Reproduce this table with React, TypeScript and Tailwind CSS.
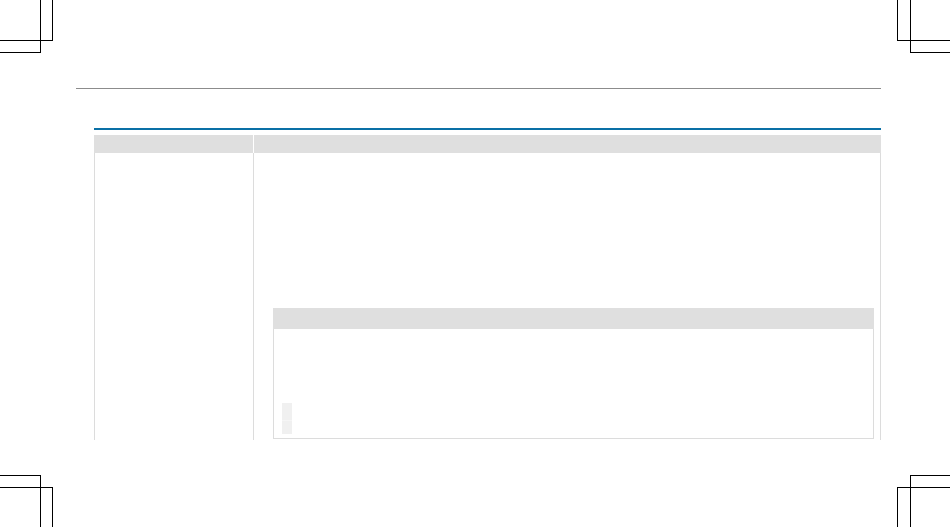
import React from 'react';

const CropMarks: React.FC = () => (
  <>
    {/* top left */}
    <div className="absolute left-0 top-0 w-[41px] h-[53px] border-r border-b border-black" />
    <div className="absolute left-0 top-0 w-[53px] h-[41px] border-r border-b border-black" />
    {/* top right */}
    <div className="absolute left-[910px] top-0 w-[40px] h-[53px] border-l border-b border-black" />
    <div className="absolute left-[897px] top-0 w-[53px] h-[41px] border-l border-b border-black" />
    {/* bottom left */}
    <div className="absolute left-0 top-[475px] w-[41px] h-[52px] border-r border-t border-black" />
    <div className="absolute left-0 top-[487px] w-[53px] h-[40px] border-r border-t border-black" />
    {/* bottom right */}
    <div className="absolute left-[910px] top-[475px] w-[40px] h-[52px] border-l border-t border-black" />
    <div className="absolute left-[897px] top-[487px] w-[53px] h-[40px] border-l border-t border-black" />
  </>
);

export default function App() {
  return (
    <div className="relative w-[950px] h-[527px] bg-white overflow-hidden font-['Liberation_Sans',sans-serif]">
      <CropMarks />

      <div className="pt-[88px] pl-[76px]">
        {/* page rule */}
        <div className="w-[805px] h-px bg-[#8c8c8c]" />

        {/* table */}
        <div className="ml-[18px] mt-[39px] w-[787px]">
          <div className="h-[2px] bg-[#0a70a6]" />

          {/* header row */}
          <div className="mt-[5px] flex gap-px h-[18px]">
            <div className="w-[159px] bg-[#dfdfdf]" />
            <div className="flex-1 bg-[#dfdfdf]" />
          </div>

          {/* body row */}
          <div className="flex h-[287px]">
            <div className="w-[160px] border-l border-r border-[#dcdcdc]" />
            <div className="flex-1 border-r border-[#dcdcdc] pl-[19px] pr-[6px] pt-[155px]">
              {/* inner note box */}
              <div className="h-[131px] border border-[#dcdcdc] flex flex-col">
                <div className="-mx-px -mt-px h-[21px] bg-[#dfdfdf]" />
                <div className="flex-1 flex items-end pl-[8px] pb-[4px]">
                  <div className="w-[10px] h-[31px] flex flex-col bg-[#f0f0f0]">
                    <div className="flex-1" />
                    <div className="h-[14px] border-t border-[#f5f5f5]" />
                  </div>
                </div>
              </div>
            </div>
          </div>
        </div>
      </div>
    </div>
  );
}
